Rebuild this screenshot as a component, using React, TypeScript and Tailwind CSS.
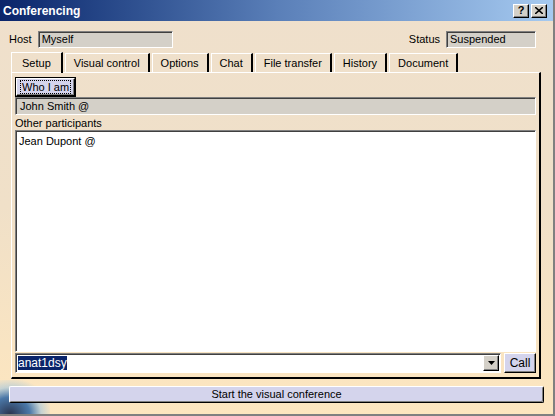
import React from "react";

const tabs = ["Setup", "Visual control", "Options", "Chat", "File transfer", "History", "Document"];

const sunken =
  "border border-t-[#808080] border-l-[#808080] border-b-white border-r-white shadow-[inset_1px_1px_0_#404040]";
const raised =
  "border border-t-white border-l-white border-b-black border-r-black shadow-[inset_-1px_-1px_0_#808080]";

export default function App() {
  return (
    <div
      className="relative flex h-[416px] w-[555px] flex-col overflow-hidden border-r-2 border-b-2 border-[#808080] bg-gradient-to-b from-[#efe0cc] via-[#f0e0c8] to-[#fde6bf] text-[11px] text-black"
      style={{ fontFamily: '"Liberation Sans", Arial, sans-serif' }}
    >
      {/* decorative swirl bottom left */}
      <div className="pointer-events-none absolute bottom-0 left-0 h-[34px] w-[50px] bg-[radial-gradient(ellipse_at_20%_100%,#2a3550_0%,#4b78a8_35%,rgba(140,190,230,0.5)_55%,rgba(253,230,191,0)_75%)]" />

      {/* title bar */}
      <div className="flex h-[21px] shrink-0 items-center justify-between bg-gradient-to-r from-[#0a246a] via-[#5a7fb8] to-[#a6caf0] pl-[3px] pr-[6px]">
        <span className="text-[12px] font-bold text-white">Conferencing</span>
        <div className="flex gap-[2px]">
          <div className={`flex h-[14px] w-[16px] items-center justify-center bg-[#d4d0c8] text-[11px] font-bold leading-none ${raised}`}>?</div>
          <div className={`flex h-[14px] w-[16px] items-center justify-center bg-[#d4d0c8] ${raised}`}>
            <svg width="8" height="7" viewBox="0 0 8 7">
              <path d="M0 0L8 7M8 0L0 7" stroke="black" strokeWidth="1.6" />
            </svg>
          </div>
        </div>
      </div>

      {/* host / status */}
      <div className="mt-[10px] flex items-center pl-[9px] pr-[17px]">
        <span>Host</span>
        <div className={`ml-[6px] flex h-[17px] w-[135px] items-center bg-[#d4d0c8] pl-[3px] ${sunken}`}>Myself</div>
        <span className="ml-auto">Status</span>
        <div className={`ml-[6px] flex h-[17px] w-[90px] items-center bg-[#d4d0c8] pl-[3px] ${sunken}`}>Suspended</div>
      </div>

      {/* tabs */}
      <div className="mt-[4px] flex items-end pl-[11px]">
        {tabs.map((t, i) => (
          <div
            key={t}
            className={
              i === 0
                ? "relative z-10 -mb-[1px] flex h-[21px] items-center border-t border-l border-white border-r-2 border-r-black px-[10px]"
                : "ml-[2px] flex h-[19px] items-center border-t border-l border-white border-r-2 border-r-black px-[8px]"
            }
          >
            {t}
          </div>
        ))}
      </div>

      {/* panel */}
      <div className="ml-[11px] mr-[12px] flex flex-1 flex-col border-t border-l border-white border-r-2 border-b-2 border-r-black border-b-black px-[3px] pt-[4px] pb-[4px]">
        <div className="flex">
          <div className="border border-black">
            <div className={`flex h-[18px] items-center bg-[#d4d4ec] px-[3px] ${raised}`}>
              <span className="border border-dotted border-black px-[1px] leading-[12px]">Who I am</span>
            </div>
          </div>
        </div>
        <div className={`flex h-[18px] items-center bg-[#d4d0c8] pl-[4px] ${sunken}`}>John Smith @</div>
        <div className="mt-[1px] h-[14px] leading-[14px]">Other participants</div>
        <div className={`flex-1 bg-white pl-[3px] pt-[2px] ${sunken}`}>Jean Dupont @</div>
        <div className="mt-[1px] flex items-center gap-[3px]">
          <div className={`flex h-[20px] flex-1 items-center bg-white pl-[2px] ${sunken}`}>
            <span className="bg-[#0a246a] text-[12px] leading-[14px] text-white">anat1dsy</span>
            <div className={`ml-auto mr-[1px] flex h-[16px] w-[16px] items-center justify-center bg-[#d4d0c8] ${raised}`}>
              <svg width="7" height="4" viewBox="0 0 7 4">
                <path d="M0 0H7L3.5 4Z" fill="black" />
              </svg>
            </div>
          </div>
          <div className={`flex h-[20px] w-[32px] items-center justify-center bg-[#d4d4ec] text-[12px] ${raised}`}>Call</div>
        </div>
      </div>

      {/* start button */}
      <div className="relative mt-[7px] mb-[11px] px-[9px]">
        <div className={`flex h-[17px] items-center justify-center rounded-[2px] bg-[#d4d4ec] ${raised}`}>
          Start the visual conference
        </div>
      </div>
    </div>
  );
}
